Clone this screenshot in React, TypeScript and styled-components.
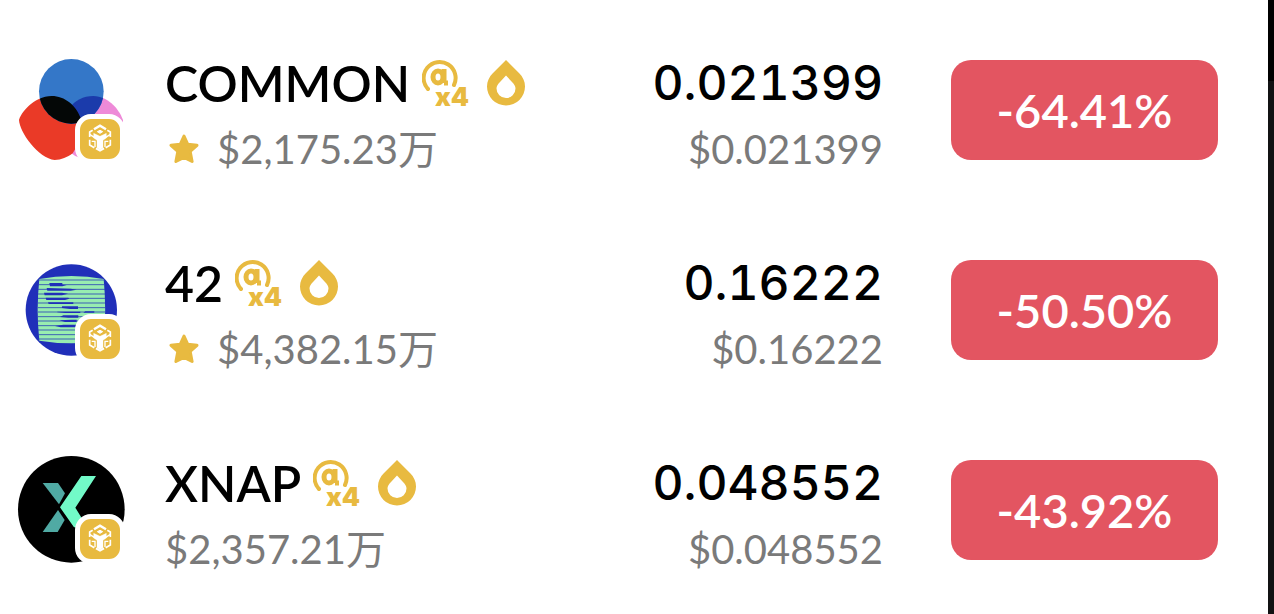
import React from "react";
import styled, { createGlobalStyle } from "styled-components";

const GOLD = "#e8ba40";

const GlobalStyle = createGlobalStyle`
  * { box-sizing: border-box; }
  body {
    margin: 0;
    background: #ffffff;
    font-family: Lato, "Noto Sans CJK SC", sans-serif;
  }
`;

const Page = styled.div`
  display: flex;
  min-height: 100vh;
`;

const Panel = styled.main`
  flex: 1;
  min-width: 0;
  background: #ffffff;
`;

const EdgeStrip = styled.div`
  flex: none;
  width: 6px;
  background: linear-gradient(#000000 81px, #111213 81px);
`;

const TokenList = styled.ul`
  list-style: none;
  margin: 0;
  padding: 10px 50px 0 17px;
`;

const TokenRow = styled.li`
  display: flex;
  align-items: center;
  height: 200px;
`;

const Avatar = styled.div`
  position: relative;
  flex: none;
  width: 108px;
  height: 108px;
  margin-right: 40px;

  > svg {
    display: block;
  }
`;

const ChainBadge = styled.span`
  position: absolute;
  right: 0;
  bottom: 0;
  width: 50px;
  height: 50px;
  border: 5px solid #ffffff;
  border-radius: 16px;
  background: ${GOLD};

  svg {
    display: block;
  }
`;

const Stack = styled.div<{ $end?: boolean }>`
  display: flex;
  flex-direction: column;
  align-items: ${(p) => (p.$end ? "flex-end" : "flex-start")};
  flex: ${(p) => (p.$end ? "none" : "1")};
  padding-top: 12px;
`;

const PrimaryLine = styled.div`
  display: flex;
  align-items: center;
  height: 66px;
  color: #000000;
  font-size: 50px;
  font-weight: 600;
  line-height: 66px;
  white-space: nowrap;
`;

const PriceLine = styled(PrimaryLine)`
  font-family: Inter, sans-serif;
  font-size: 48px;
  font-weight: 500;
  font-variant-numeric: tabular-nums;
`;

const SecondaryLine = styled(PrimaryLine)`
  color: #7a7a7a;
  font-size: 40px;
  font-weight: 400;
`;

const Symbol = styled.span`
  margin-right: 12px;
`;

const Tag = styled.svg`
  display: block;
  margin-right: 17px;
`;

const Star = styled.svg`
  display: block;
  margin: 0 18px 0 4px;
`;

const Change = styled.span`
  display: flex;
  align-items: center;
  justify-content: center;
  flex: none;
  width: 267px;
  height: 100px;
  margin-left: 68px;
  border-radius: 20px;
  background: #e35561;
  color: #ffffff;
  font-size: 47px;
  font-weight: 600;
`;

const BadgeMark = () => (
  <svg width="40" height="40" viewBox="0 0 120 120" fill="none" stroke="#fff" aria-hidden="true">
    <path d="M42 31 L60 20 L78 31" strokeWidth="7" />
    <path d="M38 34 L29 39 V54 M82 34 L91 39 V54" strokeWidth="5" />
    <path d="M29 62 V78 L43 86 M91 62 V78 L77 86" strokeWidth="5" />
    <path d="M48 88 L60 95 L72 88" strokeWidth="6" />
    <path d="M60 34 L68 38 L60 43 L52 38 Z" fill="#fff" strokeWidth="3" />
    <path d="M29 46 L44 56 M91 46 L76 56" strokeWidth="4" />
    <path d="M35 67 H45 V84 M85 67 H75 V84" strokeWidth="4" />
    <path d="M41 43 L60 52 L79 43 V57 L69 64 V86 L60 92 L51 86 V64 L41 57 Z" fill="#fff" />
  </svg>
);

const CommonLogo = () => (
  <svg width="108" height="108" viewBox="51 48 324 324" aria-hidden="true">
    <defs>
      <clipPath id="blueDisc">
        <circle cx="214" cy="154" r="97" />
      </clipPath>
      <path id="redBlob" d="M155 168 C195 168 228 197 241 232 C246 270 240 310 218 340 C202 352 184 360 164 360 C140 358 112 337 91 310 C72 286 58 258 57 240 C68 206 112 168 155 168 Z" />
      <path id="pinkBlob" d="M280 168 C320 168 355 202 369 240 C372 262 330 350 264 360 C246 358 230 352 214 340 C200 300 190 240 208 204 C224 182 250 168 280 168 Z" />
    </defs>
    <use href="#pinkBlob" fill="#ee8ad8" />
    <use href="#redBlob" fill="#ea3a27" />
    <circle cx="214" cy="154" r="97" fill="#3477c8" />
    <g clipPath="url(#blueDisc)">
      <use href="#pinkBlob" fill="#1b3bab" />
      <use href="#redBlob" fill="#040706" />
    </g>
  </svg>
);

const stripes = [120, 134, 148, 162, 175, 189, 203, 216, 230, 243, 257, 270, 284, 297];

const FortyTwoLogo = () => (
  <svg width="108" height="108" viewBox="51 48 324 324" aria-hidden="true">
    <circle cx="214" cy="210" r="137" fill="#202fb9" />
    <path d="M118 117 Q214 99 311 117 Q320 210 311 302 Q214 318 118 302 Q108 210 118 117 Z" fill="#98edb0" />
    <g stroke="#2a44b6" strokeWidth="2.5">
      {stripes.map((y) => (
        <line key={y} x1="114" x2="315" y1={y} y2={y} />
      ))}
    </g>
    <g fill="#202fb9">
      <path d="M148 129 H187 V134 L200 135 L187 139 H150 Z" />
      <path d="M140 144 L212 146 L230 149 L212 152 H142 Z" />
      <path d="M132 158 H186 L204 161 L186 166 H134 Z" />
      <path d="M137 173 H205 L208 176 L195 180 H139 Z" />
      <path d="M144 187 H220 V192 H146 Z" />
      <path d="M186 199 H234 V207 H210 L186 204 Z" />
      <path d="M172 215 H241 V219 H196 L172 217 Z" />
      <path d="M256 214 H283 V218 H250 Z" />
      <path d="M190 226 H235 V233 H205 L180 231 Z" />
      <path d="M178 241 L215 239 H230 V246 H195 Z" />
      <path d="M165 258 L190 254 H228 V262 H182 Z" />
    </g>
  </svg>
);

const XnapLogo = () => (
  <svg width="108" height="108" viewBox="51 48 324 324" aria-hidden="true">
    <circle cx="214" cy="208" r="160" fill="#000" />
    <path d="M128 129 H174 L195 160 L177 193 Z" fill="#50aaa4" />
    <path d="M174 210 L194 240 L173 276 H128 Z" fill="#50aaa4" />
    <path d="M244 108 H288 L226 203 L262 262 L222 262 L180 202 Z" fill="#72fac8" />
  </svg>
);

const AlphaTag = () => (
  <Tag width="48" height="66" viewBox="0 -9 48 66" role="img" aria-label="Alpha x4">
    <g fill="none" stroke={GOLD}>
      <path d="M6 30 A16 16 0 1 1 32 26" strokeWidth="4" strokeLinecap="round" />
      <ellipse cx="16" cy="18" rx="5" ry="6" strokeWidth="5" />
      <path d="M22 10 V24 M22 24 H26" strokeWidth="5" />
    </g>
    <text x="13" y="47" fill={GOLD} fontFamily="Inter, sans-serif" fontWeight="900" fontSize="26">x4</text>
  </Tag>
);

const DropTag = () => (
  <Tag width="38" height="46" viewBox="0 0 38 46" aria-hidden="true">
    <path
      fill={GOLD}
      fillRule="evenodd"
      d="M19 0 L32 13 C36 17 38 21.500 38 26.500 A19 19 0 0 1 0 26.500 C0 21.500 2 17 6 13 Z M19 15.500 L13 22 C10.500 24.500 9.500 26.500 9.500 28.500 A9.500 9.500 0 0 0 28.500 28.500 C28.500 26.500 27.500 24.500 25 22 Z"
    />
  </Tag>
);

const StarIcon = () => (
  <Star width="30" height="30" viewBox="0 0 30 30" aria-hidden="true">
    <path
      d="M15 2 L18.800 10.300 L28 11.300 L21.200 17.500 L23.100 27.500 L15 23.400 L6.900 27.500 L8.800 17.500 L2 11.300 L11.200 10.300 Z"
      fill={GOLD}
      stroke={GOLD}
      strokeWidth="3"
      strokeLinejoin="round"
    />
  </Star>
);

interface Token {
  symbol: string;
  logo: React.ReactNode;
  starred: boolean;
  volume: string;
  price: string;
  change: string;
}

const tokens: Token[] = [
  { symbol: "COMMON", logo: <CommonLogo />, starred: true, volume: "$2,175.23万", price: "0.021399", change: "-64.41%" },
  { symbol: "42", logo: <FortyTwoLogo />, starred: true, volume: "$4,382.15万", price: "0.16222", change: "-50.50%" },
  { symbol: "XNAP", logo: <XnapLogo />, starred: false, volume: "$2,357.21万", price: "0.048552", change: "-43.92%" },
];

export default function App() {
  return (
    <>
      <GlobalStyle />
      <Page>
        <Panel>
          <TokenList>
            {tokens.map((t) => (
              <TokenRow key={t.symbol}>
                <Avatar>
                  {t.logo}
                  <ChainBadge>
                    <BadgeMark />
                  </ChainBadge>
                </Avatar>
                <Stack>
                  <PrimaryLine>
                    <Symbol>{t.symbol}</Symbol>
                    <AlphaTag />
                    <DropTag />
                  </PrimaryLine>
                  <SecondaryLine>
                    {t.starred && <StarIcon />}
                    <span>{t.volume}</span>
                  </SecondaryLine>
                </Stack>
                <Stack $end>
                  <PriceLine>{t.price}</PriceLine>
                  <SecondaryLine>${t.price}</SecondaryLine>
                </Stack>
                <Change>{t.change}</Change>
              </TokenRow>
            ))}
          </TokenList>
        </Panel>
        <EdgeStrip />
      </Page>
    </>
  );
}
